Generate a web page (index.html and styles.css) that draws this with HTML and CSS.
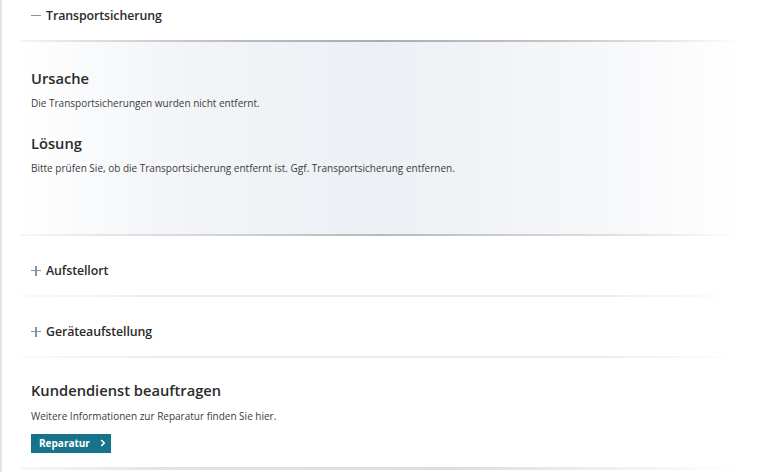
FILE: index.html
```html
<!DOCTYPE html>
<html lang="de">
<head>
    <meta charset="UTF-8">
    <meta name="viewport" content="width=device-width, initial-scale=1.0">
    <title>Transportsicherung</title>
    <link rel="stylesheet" href="styles.css">
</head>
<body>
    <div class="page">
        <div class="acc-head">
            <span class="acc-icon minus"></span>
            <span class="acc-title">Transportsicherung</span>
        </div>
        <div class="acc-panel">
            <h2>Ursache</h2>
            <p>Die Transportsicherungen wurden nicht entfernt.</p>
            <h2>Lösung</h2>
            <p>Bitte prüfen Sie, ob die Transportsicherung entfernt ist. Ggf. Transportsicherung entfernen.</p>
        </div>

        <div class="acc-row">
            <span class="acc-icon plus"></span>
            <span class="acc-title">Aufstellort</span>
        </div>
        <div class="acc-row">
            <span class="acc-icon plus"></span>
            <span class="acc-title">Geräteaufstellung</span>
        </div>

        <div class="service">
            <h2>Kundendienst beauftragen</h2>
            <p>Weitere Informationen zur Reparatur finden Sie hier.</p>
            <a class="button" href="#">Reparatur
                <svg width="6" height="8" viewBox="0 0 6 8"><path d="M1.2 1 L4.2 4 L1.2 7" fill="none" stroke="#fff" stroke-width="1.6"/></svg>
            </a>
        </div>
    </div>
</body>
</html>
```

FILE: styles.css
```css
body {
    font-family: 'Open Sans', 'Noto Sans', sans-serif;
    margin: 0;
    padding: 0;
    background-color: #fff;
    color: #2d2d2d;
}
.page {
    border-left: 2px solid #e4e4e4;
    padding: 0 20px 0 18px;
    height: 472px;
    box-sizing: border-box;
    overflow: hidden;
}
.acc-head {
    display: flex;
    align-items: center;
    height: 31px;
    padding: 0 0 0 11px;
}
.acc-title {
    font-size: 12.4px;
    font-weight: 600;
    color: #2b2b2b;
    letter-spacing: -0.1px;
}
.acc-icon {
    position: relative;
    width: 10px;
    height: 10px;
    margin-right: 5px;
}
.acc-icon::before,
.acc-icon::after {
    content: "";
    position: absolute;
    background-color: #85919e;
}
.acc-icon::before {
    left: 0;
    top: 4px;
    width: 10px;
    height: 1.5px;
}
.plus::after {
    left: 4.25px;
    top: 0;
    width: 1.5px;
    height: 10px;
}
.acc-panel {
    position: relative;
    margin-top: 9px;
    height: 196px;
    padding: 28px 11px 0;
    box-sizing: border-box;
    background: linear-gradient(to right, #ffffff 0%, #f3f5f8 20%, #ecf0f4 50%, #f6f7f9 80%, #ffffff 100%);
}
.acc-panel::before,
.acc-panel::after {
    content: "";
    position: absolute;
    left: 0;
    right: 0;
    height: 2px;
}
.acc-panel::before {
    top: 0;
    background: linear-gradient(to right, rgba(200,202,205,0.2) 0%, #b9bcc0 30%, #a9adb2 50%, #c4c6c9 75%, rgba(230,230,230,0) 100%);
}
.acc-panel::after {
    bottom: 0;
    background: linear-gradient(to right, rgba(220,220,220,0.2) 0%, #cfd1d3 30%, #b6b9bd 50%, #d4d6d8 75%, rgba(235,235,235,0) 100%);
}
h2 {
    margin: 0;
    font-size: 14.7px;
    font-weight: 600;
    color: #2b2b2b;
    line-height: 20px;
}
p {
    margin: 8px 0 23px;
    font-size: 10px;
    color: #3c3c3c;
    line-height: 14px;
}
.acc-row {
    position: relative;
    display: flex;
    align-items: center;
    height: 61px;
    padding: 8px 0 0 11px;
    box-sizing: border-box;
}
.acc-row::after {
    content: "";
    position: absolute;
    left: 0;
    right: 0;
    bottom: 0;
    height: 2px;
    background: linear-gradient(to right, rgba(240,240,240,0.3) 0%, #ececec 20%, #ececec 80%, rgba(245,245,245,0) 100%);
}
.service {
    position: relative;
    padding: 22px 11px 0;
    height: 113px;
    box-sizing: border-box;
}
.service p {
    margin: 9px 0 7px;
}
.service::after {
    content: "";
    position: absolute;
    left: 0;
    right: 0;
    bottom: 1px;
    height: 3px;
    background: linear-gradient(to right, rgba(230,230,230,0.3) 0%, #e2e3e4 20%, #dcdddf 60%, rgba(240,240,240,0) 100%);
}
.button {
    display: inline-flex;
    align-items: center;
    gap: 10px;
    height: 19px;
    padding: 0 5px 0 8px;
    background-color: #17738b;
    color: #fff;
    font-size: 10px;
    font-weight: 700;
    text-decoration: none;
}
```
